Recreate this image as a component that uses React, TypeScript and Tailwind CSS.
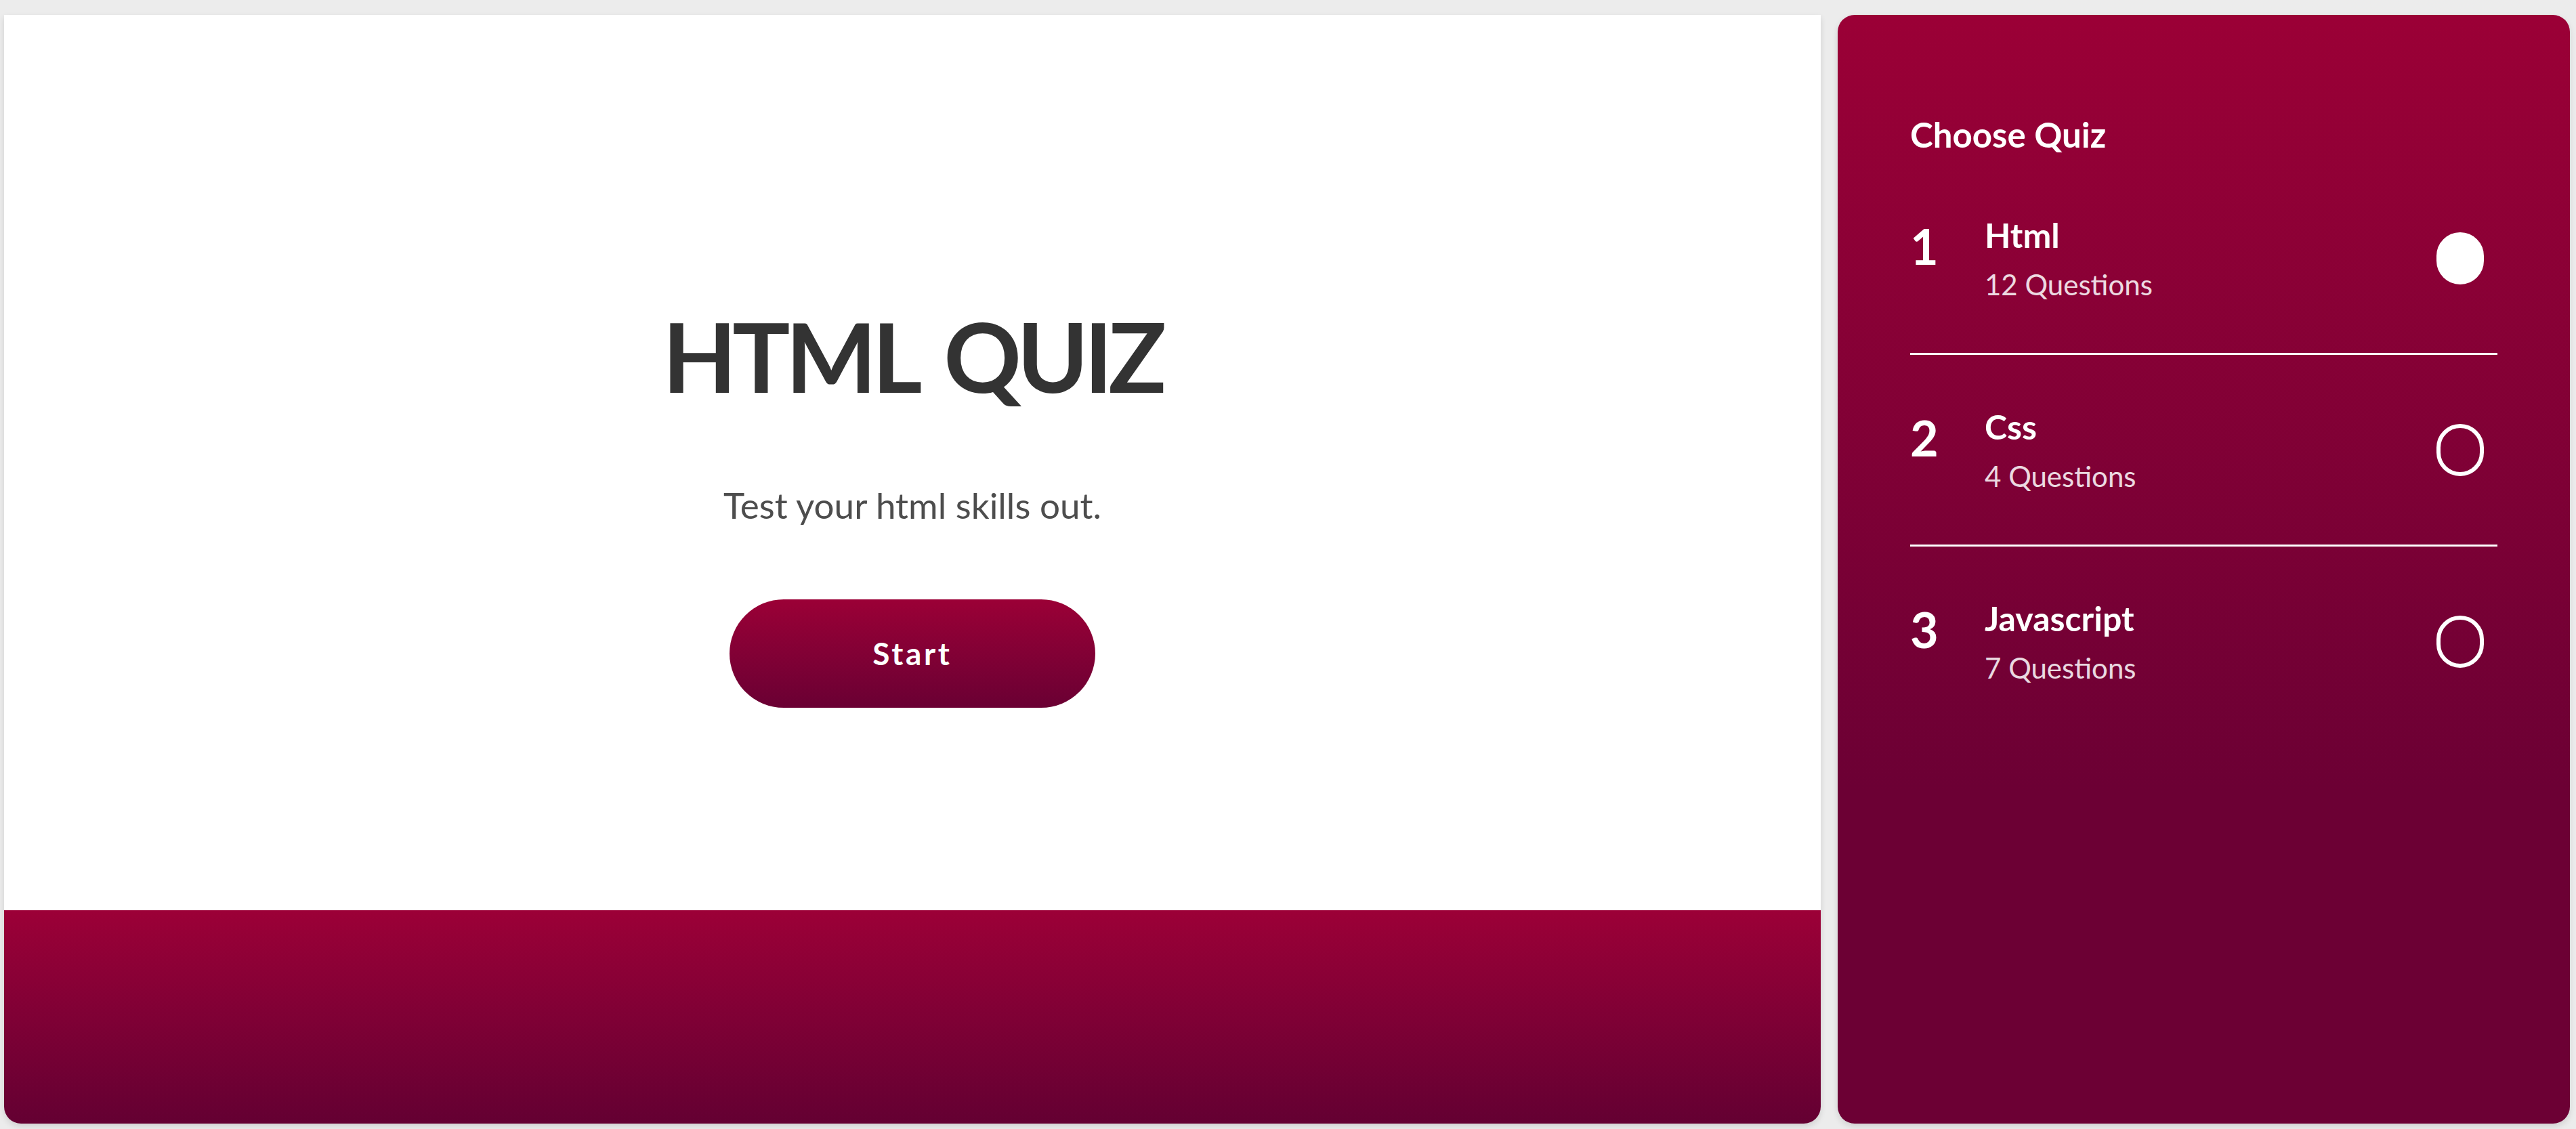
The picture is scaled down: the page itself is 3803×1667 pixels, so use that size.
import { useState } from "react";

const quizzes = [
  { id: 1, name: "Html", count: 12 },
  { id: 2, name: "Css", count: 4 },
  { id: 3, name: "Javascript", count: 7 },
];

export default function App() {
  const [selected, setSelected] = useState(1);

  return (
    <div className="flex h-screen gap-[25px] bg-[#ececec] pt-[22px] pr-[9px] pb-[8px] pl-[6px] font-[Lato,sans-serif]">
      <main className="flex flex-1 flex-col overflow-hidden rounded-b-[25px] bg-white shadow-[0_4px_10px_rgba(0,0,0,0.12)]">
        <div className="flex flex-1 flex-col items-center pt-[432px]">
          <h1 className="text-[142px] leading-none font-bold tracking-[-0.045em] [word-spacing:0.1em] text-[#333333]">
            HTML QUIZ
          </h1>
          <p className="mt-[118px] text-[53px] leading-[1.2] text-[#4d4d4d]">
            Test your html skills out.
          </p>
          <button className="mt-[107px] flex h-[160px] w-[540px] items-center justify-center rounded-full bg-linear-to-b from-[#9b0036] to-[#6a0033] text-[46px] font-bold tracking-[0.08em] text-white">
            Start
          </button>
        </div>
        <div className="h-[315px] bg-linear-to-b from-[#9c0037] to-[#640032]" />
      </main>

      <aside className="w-[1081px] rounded-[25px] bg-linear-to-b from-[#9b0036] to-[#6c0034] to-70% px-[107px] pt-[146px] text-white shadow-[0_4px_10px_rgba(0,0,0,0.12)]">
        <h2 className="mb-[12px] text-[51px] leading-[61px] font-bold">Choose Quiz</h2>
        <ul>
          {quizzes.map((q, i) => (
            <li
              key={q.id}
              onClick={() => setSelected(q.id)}
              className={
                "flex cursor-pointer items-center py-[76px] " +
                (i < quizzes.length - 1 ? "border-b-[3px] border-white" : "")
              }
            >
              <span className="mt-[10px] w-[110px] self-start text-[72px] leading-none font-bold">
                {q.id}
              </span>
              <div className="flex-1">
                <div className="text-[50px] leading-[60px] font-bold">{q.name}</div>
                <div className="mt-[18px] text-[42px] leading-[50px] text-white/85">
                  {q.count} Questions
                </div>
              </div>
              <span
                className={
                  "mr-[20px] h-[77px] w-[70px] rounded-full border-[6px] border-white " +
                  (selected === q.id ? "bg-white" : "")
                }
              />
            </li>
          ))}
        </ul>
      </aside>
    </div>
  );
}
